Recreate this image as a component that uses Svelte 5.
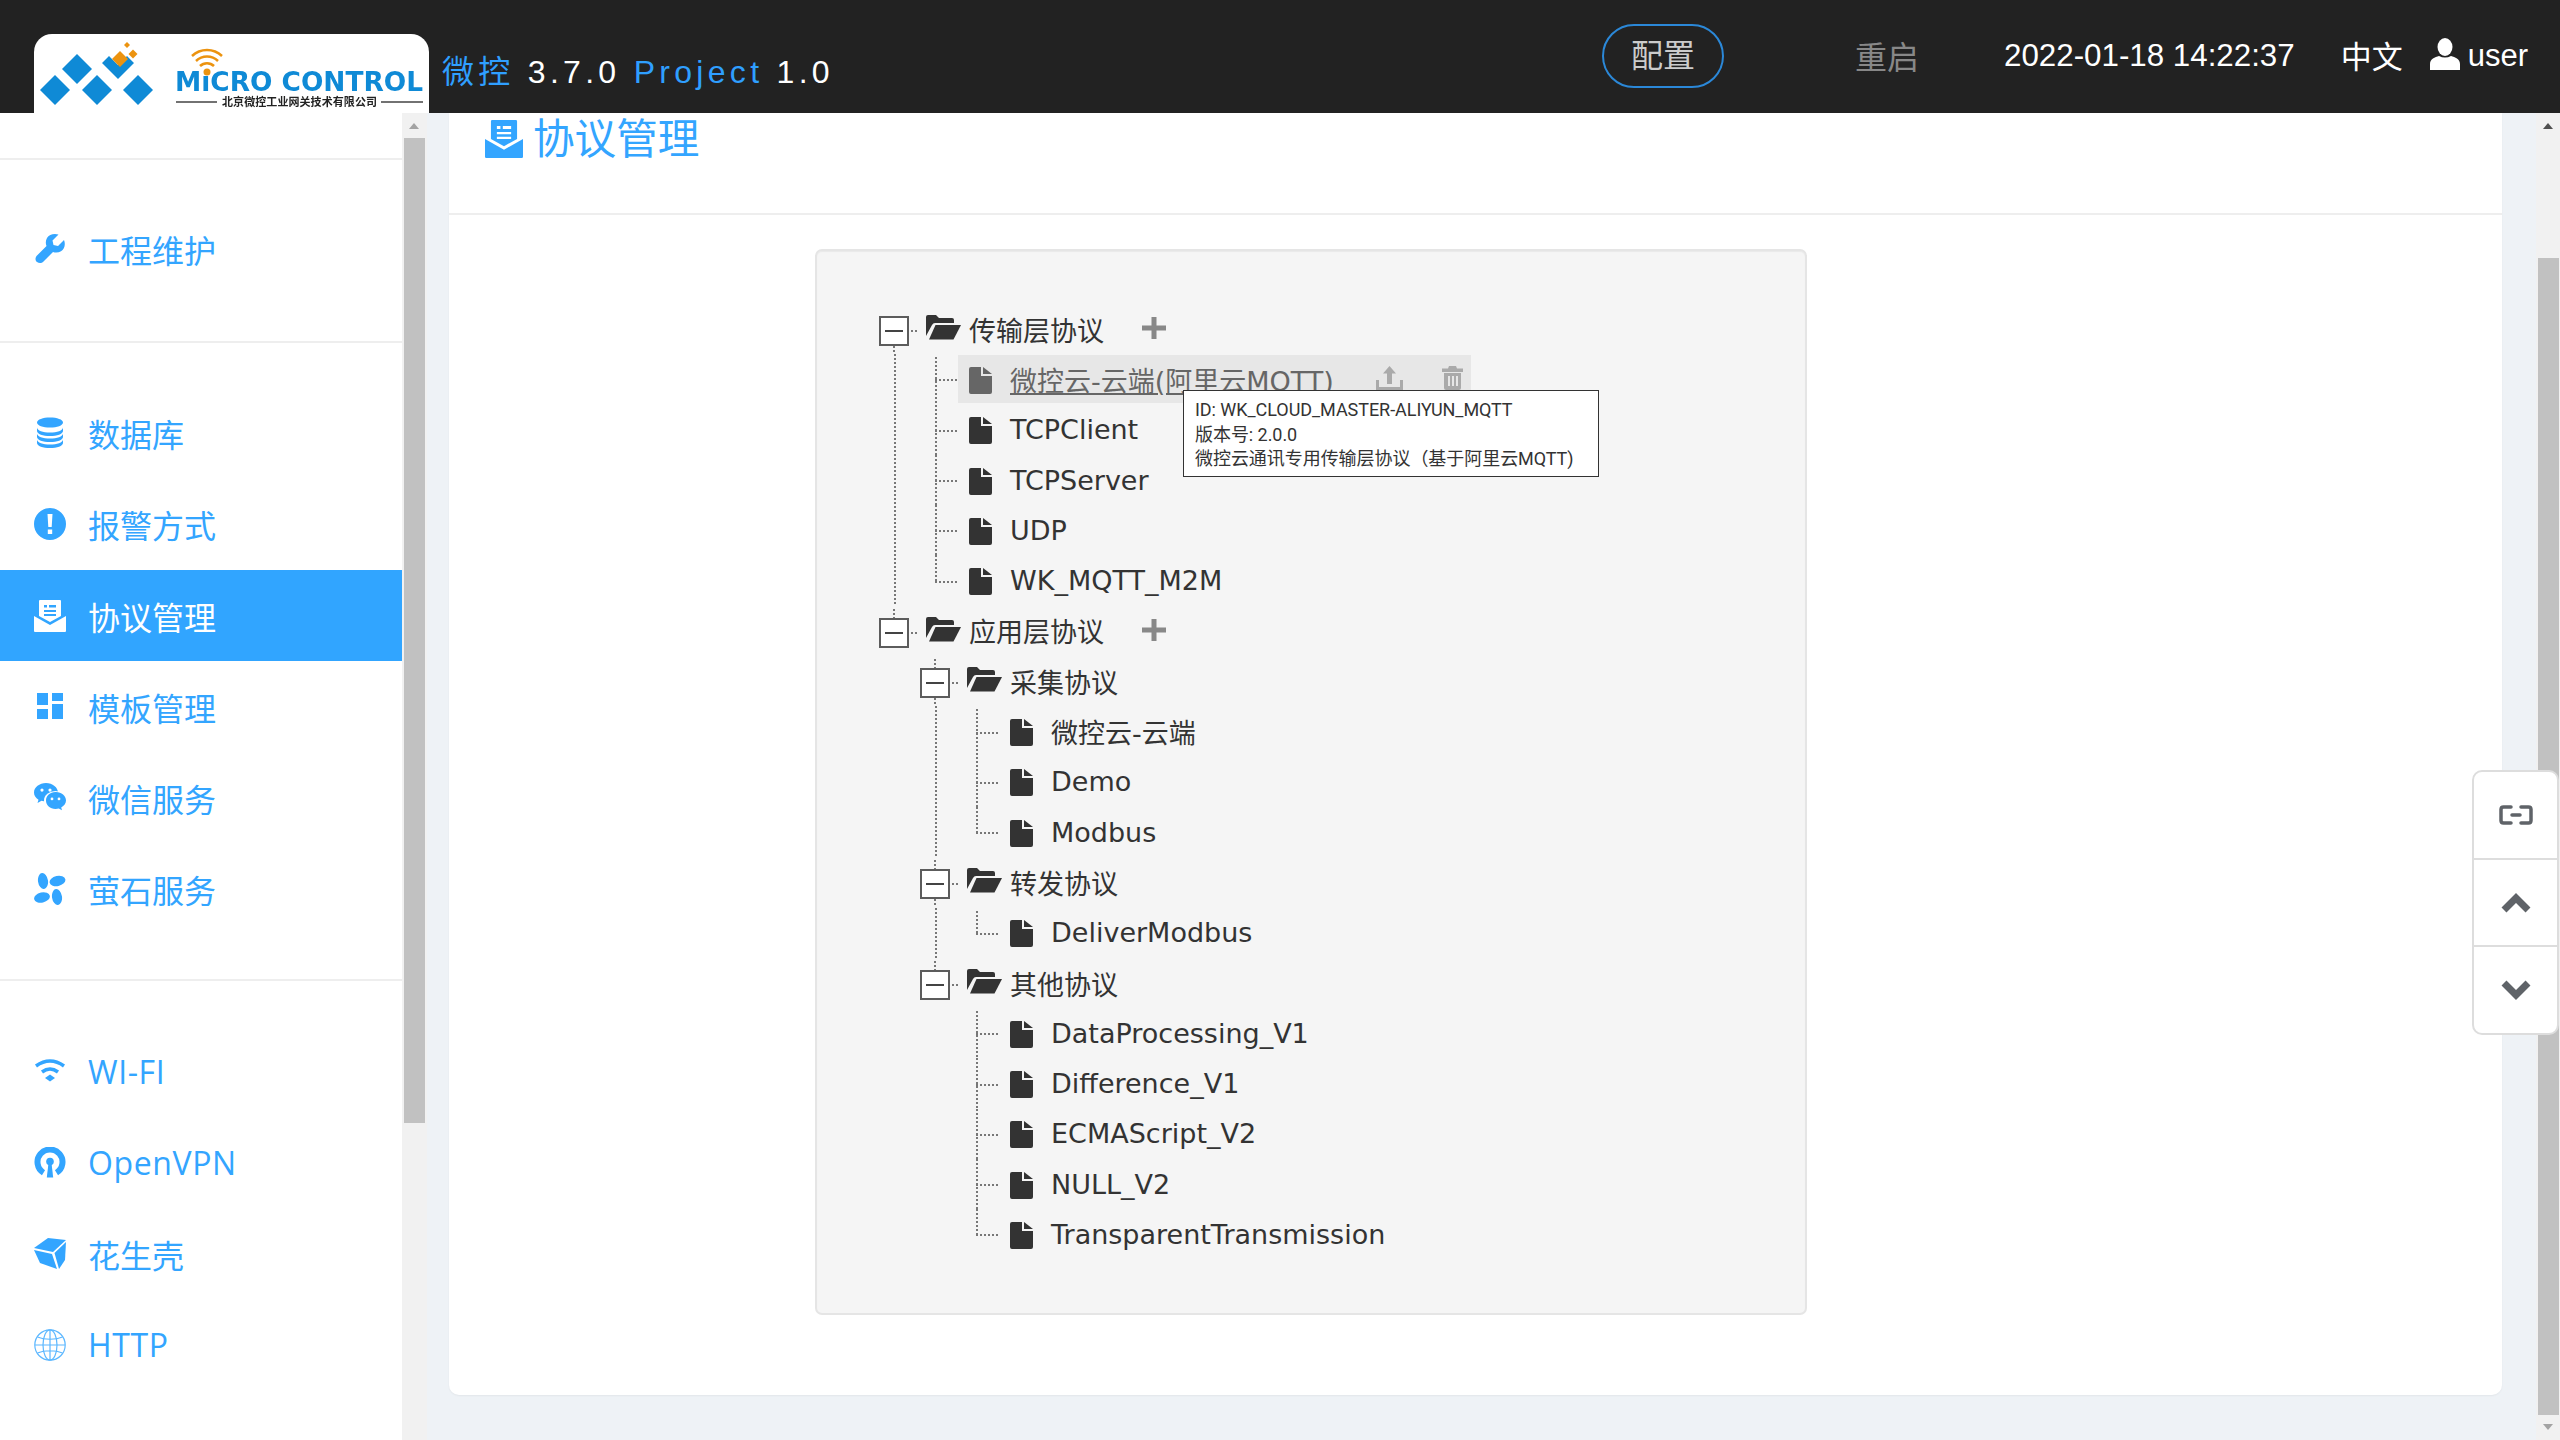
<script>
  const sections = [
    [{ icon: "wrench", label: "工程维护" }],
    [
      { icon: "database", label: "数据库" },
      { icon: "alert", label: "报警方式" },
      { icon: "inbox", label: "协议管理", active: true },
      { icon: "dash", label: "模板管理" },
      { icon: "wechat", label: "微信服务" },
      { icon: "ezviz", label: "萤石服务" }
    ],
    [
      { icon: "wifi", label: "WI-FI", latin: true },
      { icon: "vpn", label: "OpenVPN", latin: true },
      { icon: "cube", label: "花生壳" },
      { icon: "globe", label: "HTTP", latin: true }
    ]
  ];

  const leaves = (names) => names.map((name) => ({ name }));

  const tree = [
    {
      name: "传输层协议",
      add: true,
      children: [
        {
          name: "微控云-云端(阿里云MQTT)",
          hover: true,
          tip: [
            "ID: WK_CLOUD_MASTER-ALIYUN_MQTT",
            "版本号: 2.0.0",
            "微控云通讯专用传输层协议（基于阿里云MQTT)"
          ]
        },
        ...leaves(["TCPClient", "TCPServer", "UDP", "WK_MQTT_M2M"])
      ]
    },
    {
      name: "应用层协议",
      add: true,
      children: [
        { name: "采集协议", children: leaves(["微控云-云端", "Demo", "Modbus"]) },
        { name: "转发协议", children: leaves(["DeliverModbus"]) },
        {
          name: "其他协议",
          children: leaves([
            "DataProcessing_V1",
            "Difference_V1",
            "ECMAScript_V2",
            "NULL_V2",
            "TransparentTransmission"
          ])
        }
      ]
    }
  ];
</script>

{#snippet navIcon(name)}
  <svg class="nav-icon" viewBox="0 0 32 32">
    {#if name === "wrench"}
      <path d="M30 7l-6 6-4.500-1-1-4.500 6-6C20 0 15 1.500 13 5c-1.500 2.600-1.500 5.800-.5 8L3 22.500c-2 2-2 5 0 6.500s4.500 1.500 6.500-.5L19 19c2.500 1 5.500.8 8-.7 3.500-2.200 4.800-7 3-11.300z" />
    {:else if name === "database"}
      <path d="M3 5.500C3 2.500 9 .5 16 .5s13 2 13 5-6 5-13 5-13-2-13-5z" />
      <path d="M3 10.500c0 3 6 5 13 5s13-2 13-5V14c0 3-6 5-13 5s-13-2-13-5z" />
      <path d="M3 16.500c0 3 6 5 13 5s13-2 13-5V20c0 3-6 5-13 5s-13-2-13-5z" />
      <path d="M3 22.500c0 3 6 5 13 5s13-2 13-5V26c0 3-6 5-13 5s-13-2-13-5z" />
    {:else if name === "alert"}
      <path fill-rule="evenodd" d="M16 0a16 16 0 1 0 0 32a16 16 0 1 0 0-32zM13.500 6h5l-.8 13h-3.400zM13.800 21.500h4.400V26h-4.400z" />
    {:else if name === "inbox"}
      <path fill-rule="evenodd" d="M5 1q0-1 1-1h20q1 0 1 1v15l-11 6-11-6zM10 5h3v2.500h-3zM10 10h12v2h-12zM10 14h12v2h-12zM15 5h7v2.500h-7z" />
      <path d="M0 16l16 9 16-9v15q0 1-1 1H1q-1 0-1-1z" />
    {:else if name === "dash"}
      <rect x="3" y="2" width="11" height="12" />
      <rect x="18" y="2" width="11" height="8" />
      <rect x="3" y="18" width="11" height="10" />
      <rect x="18" y="13" width="11" height="15" />
    {:else if name === "wechat"}
      <path fill-rule="evenodd" d="M12 1C5.500 1 0 5.300 0 10.500c0 3 1.700 5.500 4.500 7.200L3.500 21l4-2.200c1.400.4 3 .7 4.500.7 6.500 0 12-4 12-9S18.500 1 12 1zM8 6.500a1.600 1.600 0 1 1 0 3.200a1.600 1.600 0 1 1 0-3.200zM16 6.500a1.600 1.600 0 1 1 0 3.200a1.600 1.600 0 1 1 0-3.200z" />
      <ellipse class="cut" cx="21.500" cy="18.500" rx="11.500" ry="9.500" />
      <path fill-rule="evenodd" d="M21.500 10C16 10 12 13.800 12 18.500S16 27 21.500 27c1.200 0 2.300-.2 3.300-.5l3.200 1.800-.8-2.900c2.900-1.500 4.800-4 4.800-6.900 0-4.700-4.500-8.500-10-8.500zM18 15.500a1.400 1.400 0 1 1 0 2.800a1.400 1.400 0 1 1 0-2.800zM25 15.500a1.400 1.400 0 1 1 0 2.800a1.400 1.400 0 1 1 0-2.800z" />
    {:else if name === "ezviz"}
      <ellipse cx="9" cy="8" rx="5" ry="8" transform="rotate(-8 9 8)" />
      <ellipse cx="23.500" cy="8" rx="8" ry="5" transform="rotate(-12 23.500 8)" />
      <ellipse cx="8" cy="24.500" rx="8" ry="5" transform="rotate(-12 8 24.500)" />
      <ellipse cx="23" cy="24" rx="5" ry="8" transform="rotate(-8 23 24)" />
    {:else if name === "wifi"}
      <path class="line" d="M2 11Q16 1 30 11" />
      <path class="line" d="M8 17Q16 11 24 17" />
      <path d="M16 19.500l5 3.500-5 3.500-5-3.500z" />
    {:else if name === "vpn"}
      <path class="line thick" d="M9.500 25.700A12.500 12.500 0 1 1 22.500 25.700" />
      <circle cx="16" cy="14.500" r="3.800" />
      <path d="M14.500 16h3l1.700 14.500h-6.400z" />
    {:else if name === "cube"}
      <path d="M0 10L14 0l18 2-13 12z" />
      <path d="M0 12l18 4 5 15-17-6z" />
      <path d="M20.500 15L32 4l-1 18-6 9z" />
    {:else if name === "globe"}
      <g class="thin">
        <circle cx="16" cy="16" r="15.200" />
        <ellipse cx="16" cy="16" rx="7" ry="15.200" />
        <path d="M16 1v30M1 16h30M3.500 8c7 3 18 3 25 0M3.500 24c7-3 18-3 25 0" />
      </g>
    {/if}
  </svg>
{/snippet}

{#snippet treeNode(node, last, first)}
  <li>
    {#if node.children}
      <div class="row">
        <span class="switch" class:tail={!last}><i></i></span>
        <span class="stub"></span>
        <svg class="folder" viewBox="0 0 35 26">
          <path d="M0 22V3q0-2 2-2h8l3 3h13q2 0 2 2v3H9q-2 0-3 2z" />
          <path d="M3 25.500L9.500 11H35l-7.500 14.500z" />
        </svg>
        <span class="name">{node.name}</span>
        {#if node.add}
          <svg class="plus" viewBox="0 0 24 22"><path d="M9.500 0h5v8.500H24v5h-9.500V22h-5v-8.500H0v-5h9.500z" /></svg>
        {/if}
      </div>
      <ul class="children" class:cont={!last}>
        {#each node.children as child, i}
          {@render treeNode(child, i === node.children.length - 1, i === 0)}
        {/each}
      </ul>
    {:else}
      <div class="row">
        <span class="branch" class:end={last} class:start={first}></span>
        <div class="leaf" class:hover={node.hover}>
          <svg class="file" viewBox="0 0 23 27">
            <path d="M0 2q0-2 2-2h10v9h11v16q0 2-2 2H2q-2 0-2-2z" />
            <path d="M14 0l9 7h-9z" />
          </svg>
          <span class="name">{node.name}</span>
          {#if node.hover}
            <svg class="tool upload" viewBox="0 0 27 24">
              <path d="M0 14v10h27V14h-3v7H3v-7z" />
              <path d="M13.500 0l6.500 7.500h-4V18h-5V7.500H7z" />
            </svg>
            <svg class="tool trash" viewBox="0 0 21 24" fill-rule="evenodd">
              <path d="M7 0h7l1 2.500h6V6H0V2.500h6z" />
              <path d="M2 7h17v15q0 2-2 2H4q-2 0-2-2zM6 10v10h2V10zM10 10v10h2V10zM14 10v10h2V10z" />
            </svg>
            <div class="tip">
              {#each node.tip as line}
                <div>{line}</div>
              {/each}
            </div>
          {/if}
        </div>
      </div>
    {/if}
  </li>
{/snippet}

<div class="app">
  <header class="topbar">
    <div class="logo">
      <svg viewBox="0 0 395 79" width="395" height="79">
        <g class="diamonds">
          <path d="M43 20l15 15-15 15-15-15z" />
          <path d="M21 41l15 15-15 15-15-15z" />
          <path d="M63 41l15 15-15 15-15-15z" />
          <path d="M104 41l15 15-15 15-15-15z" />
          <path d="M68 29l7-7 9 9 9-9 7 7-16 16z" />
        </g>
        <g class="orange">
          <path d="M86 17l8 8-8 8-8-8z" />
          <path d="M99 15.500l4.500 4.500-4.500 4.500-4.500-4.500z" />
          <path d="M93 8l3 3-3 3-3-3z" />
          <circle cx="173" cy="38" r="3.500" />
        </g>
        <g class="wifi-arcs">
          <path d="M166 32a10 10 0 0 1 14 0M162 27a16 16 0 0 1 22 0M158 22a22 22 0 0 1 30 0" />
        </g>
        <text class="brand" x="141" y="57" textLength="248" lengthAdjust="spacingAndGlyphs">MıCRO CONTROL</text>
        <path class="rule" d="M142 68h41M347 68h42" />
        <text class="company" x="188" y="72" textLength="155">北京微控工业网关技术有限公司</text>
      </svg>
    </div>
    <div class="version">
      <span class="blue">微控</span> 3.7.0 <span class="blue">Project</span> 1.0
    </div>
    <div class="top-right">
      <button class="config">配置</button>
      <span class="restart">重启</span>
      <span class="clock">2022-01-18 14:22:37</span>
      <span class="lang">中文</span>
      <span class="user">
        <svg viewBox="0 0 30 32" width="30" height="32">
          <ellipse cx="15" cy="9" rx="7.500" ry="9" />
          <path d="M0 32v-6c0-5 5-7 9-8q6 3 12 0c4 1 9 3 9 8v6z" />
        </svg>
        user
      </span>
    </div>
  </header>

  <div class="body">
    <nav class="sidebar">
      {#each sections as items}
        <div class="section">
          {#each items as item}
            <div class="nav-item" class:active={item.active}>
              {@render navIcon(item.icon)}
              <span class:latin={item.latin}>{item.label}</span>
            </div>
          {/each}
        </div>
      {/each}
    </nav>
    <div class="scroll side-scroll">
      <span class="arrow up soft"></span>
      <span class="thumb"></span>
    </div>

    <main class="main">
      <section class="panel">
        <h1 class="title">
          <svg viewBox="0 0 32 32" width="38" height="40">
            <path fill-rule="evenodd" d="M5 1q0-1 1-1h20q1 0 1 1v15l-11 6-11-6zM10 5h3v2.500h-3zM10 10h12v2h-12zM10 14h12v2h-12zM15 5h7v2.500h-7z" />
            <path d="M0 16l16 9 16-9v15q0 1-1 1H1q-1 0-1-1z" />
          </svg>
          协议管理
        </h1>
        <div class="content">
          <div class="well">
            <ul class="tree">
              {#each tree as node, i}
                {@render treeNode(node, i === tree.length - 1, i === 0)}
              {/each}
            </ul>
          </div>
        </div>
      </section>
    </main>

    <div class="scroll page-scroll">
      <span class="arrow up"></span>
      <span class="thumb"></span>
      <span class="arrow down soft"></span>
    </div>
  </div>

  <div class="float-tools">
    <button aria-label="link">
      <svg viewBox="0 0 34 20" width="34" height="20">
        <path d="M12 2H4.500Q2 2 2 4.500v11Q2 18 4.500 18H12M22 2h7.500Q32 2 32 4.500v11q0 2.500-2.500 2.500H22M13 10h8" />
      </svg>
    </button>
    <button aria-label="up">
      <svg viewBox="0 0 30 20" width="30" height="20"><path d="M3 17L15 5l12 12" /></svg>
    </button>
    <button aria-label="down">
      <svg viewBox="0 0 30 20" width="30" height="20"><path d="M3 3l12 12L27 3" /></svg>
    </button>
  </div>
</div>

<style>
  :global(body) {
    margin: 0;
    background: #eef2f6;
  }
  .app {
    position: relative;
    width: 2560px;
    height: 1440px;
    overflow: hidden;
    font-family: "Open Sans", "Noto Sans CJK SC", sans-serif;
  }

  /* top bar */
  .topbar {
    display: flex;
    align-items: flex-end;
    height: 113px;
    padding-left: 34px;
    box-sizing: border-box;
    background: #222;
    font-family: "Liberation Sans", "Noto Sans CJK SC", sans-serif;
    color: #fff;
  }
  .logo {
    width: 395px;
    height: 79px;
    background: #fff;
    border-radius: 18px 18px 0 0;
  }
  .logo svg {
    display: block;
    filter: blur(0.5px);
  }
  .diamonds {
    fill: #0f8ad6;
  }
  .orange {
    fill: #ec930f;
  }
  .wifi-arcs path {
    fill: none;
    stroke: #ec930f;
    stroke-width: 2.5;
  }
  .brand {
    font: bold 27px "DejaVu Sans", sans-serif;
    fill: #0f8ad6;
  }
  .rule {
    stroke: #444;
    stroke-width: 1.5;
  }
  .company {
    font: bold 11px "Noto Sans CJK SC", sans-serif;
    fill: #222;
  }
  .version {
    margin-left: 13px;
    padding-bottom: 21px;
    font-size: 32px;
    line-height: 40px;
    letter-spacing: 4.3px;
    white-space: pre;
  }
  .blue {
    color: #2f9fff;
  }
  .top-right {
    display: flex;
    align-items: center;
    align-self: stretch;
    margin-left: auto;
    padding-bottom: 1px;
  }
  .config {
    width: 122px;
    height: 64px;
    border: 2px solid #2b88d8;
    border-radius: 32px;
    background: transparent;
    color: #ccc;
    font: inherit;
    font-size: 32px;
    line-height: 52px;
    padding: 0 0 1px;
  }
  .restart {
    margin-left: 131px;
    margin-top: -3px;
    font-size: 32px;
    color: #888;
  }
  .clock {
    margin-left: 85px;
    font-size: 31.3px;
  }
  .lang {
    margin-left: 46px;
    margin-top: -4px;
    font-size: 31px;
  }
  .user {
    display: flex;
    align-items: center;
    gap: 8px;
    margin-left: 27px;
    margin-right: 32px;
    font-size: 31px;
  }
  .user svg {
    fill: #fff;
    margin-top: -5px;
  }

  .body {
    display: flex;
    height: 1327px;
  }

  /* left nav */
  .sidebar {
    width: 402px;
    flex: none;
    padding-top: 45px;
    box-sizing: border-box;
    background: #fff;
  }
  .section {
    padding: 44.5px 0;
    border-top: 2px solid #eee;
  }
  .section:first-child {
    padding: 43px 0 47px;
  }
  .nav-item {
    display: flex;
    align-items: center;
    gap: 22px;
    height: 91.2px;
    padding-left: 34px;
    font-size: 32px;
    color: #33a5ff;
  }
  .nav-item.active {
    background: #31a5ff;
    color: #fff;
  }
  .latin {
    letter-spacing: 0.6px;
  }
  .nav-icon {
    width: 32px;
    height: 32px;
    flex: none;
    fill: currentColor;
  }
  .cut {
    fill: #fff;
  }
  .line {
    fill: none;
    stroke: currentColor;
    stroke-width: 3.5;
  }
  .line.thick {
    stroke-width: 6;
  }
  .thin {
    fill: none;
    stroke: currentColor;
    stroke-width: 1.2;
    opacity: 0.8;
  }

  /* fake native scrollbars */
  .scroll {
    position: relative;
    flex: none;
    background: #f1f1f1;
  }
  .side-scroll {
    width: 25px;
  }
  .page-scroll {
    width: 24px;
  }
  .thumb {
    position: absolute;
    background: #c1c1c1;
  }
  .side-scroll .thumb {
    left: 2px;
    width: 21px;
    top: 25px;
    height: 985px;
  }
  .page-scroll .thumb {
    left: 2px;
    width: 21px;
    top: 145px;
    height: 1157px;
  }
  .arrow {
    position: absolute;
    left: 7px;
    width: 0;
    height: 0;
    border-left: 5.5px solid transparent;
    border-right: 5.5px solid transparent;
  }
  .arrow.up {
    top: 10px;
    border-bottom: 6px solid #505050;
  }
  .arrow.down {
    bottom: 10px;
    border-top: 6px solid #505050;
  }
  .arrow.up.soft {
    border-bottom-color: #a3a3a3;
  }
  .arrow.down.soft {
    border-top-color: #a3a3a3;
  }

  /* main panel */
  .main {
    flex: 1;
    padding: 0 34px 0 22px;
    background: #eef2f6;
  }
  .panel {
    height: 1282px;
    background: #fff;
    border-radius: 0 0 10px 10px;
    box-shadow: 0 1px 2px rgba(0, 0, 0, 0.05);
  }
  .title {
    display: flex;
    align-items: flex-start;
    gap: 10px;
    height: 102px;
    margin: 0;
    padding: 0 0 0 36px;
    box-sizing: border-box;
    border-bottom: 2px solid #eee;
    font-size: 41.6px;
    font-weight: 400;
    line-height: 50px;
    color: #33a5ff;
  }
  .title svg {
    fill: currentColor;
    flex: none;
    margin-top: 6px;
  }
  .content {
    padding: 34px 0 0 366px;
  }
  .well {
    width: 992px;
    height: 1066px;
    padding: 53px 0 0 62px;
    box-sizing: border-box;
    background: #f5f5f5;
    border: 2px solid #e5e5e5;
    border-radius: 7px;
    box-shadow: inset 0 1px 1px rgba(0, 0, 0, 0.05);
  }

  /* protocol tree */
  .tree,
  .children {
    margin: 0;
    padding: 0;
    list-style: none;
  }
  .tree {
    font-family: "DejaVu Sans", "Noto Sans CJK SC", sans-serif;
    font-size: 27px;
    color: #333;
  }
  .children {
    position: relative;
    padding-left: 41px;
  }
  .children.cont::before {
    content: "";
    position: absolute;
    left: 15px;
    top: 0;
    bottom: 0;
    width: 2px;
    background: repeating-linear-gradient(#777 0 2px, transparent 2px 4px);
  }
  .row {
    position: relative;
    display: flex;
    align-items: center;
    height: 50.3px;
  }
  .switch {
    position: relative;
    display: block;
    width: 30px;
    height: 30px;
    margin-top: 4px;
    flex: none;
    box-sizing: border-box;
    border: 2px solid #5c5c5c;
    background: #fff;
  }
  .switch i {
    position: absolute;
    left: 4px;
    right: 4px;
    top: 12px;
    height: 2px;
    background: #444;
  }
  .switch::before,
  .switch.tail::after {
    content: "";
    position: absolute;
    left: 12px;
    width: 2px;
    background: repeating-linear-gradient(#777 0 2px, transparent 2px 4px);
  }
  .switch::before {
    top: -11px;
    height: 9px;
  }
  .switch.tail::after {
    top: 28px;
    height: 8px;
  }
  .tree > li:first-child > .row > .switch::before {
    display: none;
  }
  .stub {
    width: 8px;
    height: 2px;
    margin: 4px 7px 0 2px;
    flex: none;
    background: repeating-linear-gradient(90deg, #777 0 2px, transparent 2px 4px);
  }
  .folder {
    width: 35px;
    height: 26px;
    margin: -4px 8px 0 0;
    flex: none;
    fill: #333;
  }
  .plus {
    width: 24px;
    height: 22px;
    margin-left: 38px;
    margin-top: -2px;
    fill: #888;
  }
  .branch {
    position: relative;
    width: 38px;
    height: 100%;
    flex: none;
  }
  .branch::before {
    content: "";
    position: absolute;
    left: 15px;
    top: 0;
    bottom: 0;
    width: 2px;
    background: repeating-linear-gradient(#777 0 2px, transparent 2px 4px);
  }
  .branch.start::before {
    top: 3px;
  }
  .branch.end::before {
    bottom: 50%;
  }
  .branch::after {
    content: "";
    position: absolute;
    left: 15px;
    right: 0;
    top: 50%;
    height: 2px;
    background: repeating-linear-gradient(90deg, #777 0 2px, transparent 2px 4px);
  }
  .leaf {
    position: relative;
    display: flex;
    align-items: center;
    height: 48px;
    padding-left: 11px;
    white-space: nowrap;
  }
  .file {
    width: 23px;
    height: 27px;
    margin-right: 18px;
    margin-top: 2px;
    flex: none;
    fill: #333;
  }
  .leaf.hover {
    width: 513px;
    box-sizing: border-box;
    background: #e7e7e7;
    color: #666;
  }
  .leaf.hover .file {
    fill: #666;
  }
  .leaf.hover .name {
    text-decoration: underline;
  }
  .tool {
    position: absolute;
    top: 11px;
    height: 24px;
    fill: #aaa;
  }
  .upload {
    left: 418px;
    width: 27px;
  }
  .trash {
    left: 484px;
    width: 21px;
  }
  .tip {
    position: absolute;
    left: 225px;
    top: 35px;
    z-index: 2;
    width: 416px;
    height: 87px;
    padding: 7px 11px;
    box-sizing: border-box;
    border: 1px solid #333;
    background: #fff;
    font-family: "Roboto", "Noto Sans CJK SC", sans-serif;
    font-size: 18px;
    line-height: 24.5px;
    letter-spacing: -0.05px;
    color: #333;
  }

  /* floating tool panel */
  .float-tools {
    position: absolute;
    right: 1px;
    top: 770px;
    display: flex;
    flex-direction: column;
    width: 87px;
    height: 265px;
    box-sizing: border-box;
    background: #fff;
    border: 2px solid #ddd;
    border-radius: 10px;
    overflow: hidden;
  }
  .float-tools button {
    display: flex;
    align-items: center;
    justify-content: center;
    flex: 1;
    padding: 0;
    border: 0;
    border-bottom: 2px solid #ddd;
    background: transparent;
  }
  .float-tools button:last-child {
    border-bottom: 0;
  }
  .float-tools svg {
    fill: none;
    stroke: #5f6368;
    stroke-width: 3.5;
    stroke-linecap: round;
  }
  .float-tools button + button svg {
    stroke-width: 7;
    stroke-linecap: butt;
  }
</style>
